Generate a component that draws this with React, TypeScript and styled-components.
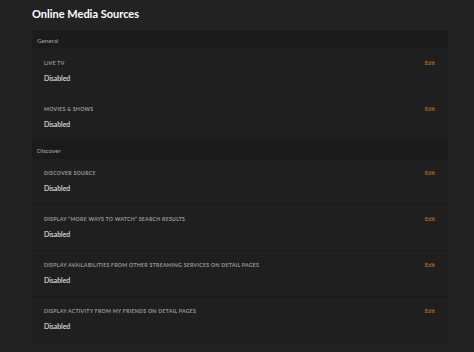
import React from "react";
import styled, { createGlobalStyle } from "styled-components";

const Global = createGlobalStyle`
  html, body { margin: 0; padding: 0; background: #222222; }
  body { font-family: Lato, "Open Sans", "Liberation Sans", sans-serif; -webkit-font-smoothing: antialiased; }
`;

const Page = styled.div`
  width: 474px;
  height: 352px;
  box-sizing: border-box;
  padding: 7px 26px 0 32px;
  overflow: hidden;
`;

const Title = styled.h1`
  margin: 0 0 10px 0;
  font-size: 11px;
  line-height: 14px;
  font-weight: 700;
  color: #ffffff;
`;

const Section = styled.section`
  display: flex;
  flex-direction: column;
`;

const SectionHeader = styled.div`
  height: 18px;
  display: flex;
  align-items: center;
  padding-left: 5px;
  background: #1b1b1b;
  font-size: 6.2px;
  color: #a8a8a8;
`;

const Row = styled.div`
  height: 46px;
  box-sizing: border-box;
  display: flex;
  justify-content: space-between;
  padding: 0 13px 0 12px;
  background: #1f1f1f;
  border-bottom: 1px solid #1a1a1a;
`;

const RowText = styled.div`
  display: flex;
  flex-direction: column;
`;

const Label = styled.div`
  margin-top: 10px;
  font-size: 5.2px;
  line-height: 8px;
  letter-spacing: 0.28px;
  font-weight: 700;
  text-transform: uppercase;
  color: #9a9a9a;
`;

const Value = styled.div`
  margin-top: 6px;
  font-size: 6.9px;
  line-height: 10px;
  color: #f2f2f2;
`;

const Edit = styled.button`
  margin-top: 10px;
  height: 8px;
  padding: 0;
  border: 0;
  background: none;
  font-family: inherit;
  font-size: 6px;
  line-height: 8px;
  color: #cc7b19;
  cursor: pointer;
`;

type Setting = { label: string; value: string };

const sections: { title: string; items: Setting[] }[] = [
  {
    title: "General",
    items: [
      { label: "Live TV", value: "Disabled" },
      { label: "Movies & Shows", value: "Disabled" },
    ],
  },
  {
    title: "Discover",
    items: [
      { label: "Discover Source", value: "Disabled" },
      { label: "Display \u201cMore Ways To Watch\u201d Search Results", value: "Disabled" },
      { label: "Display Availabilities From Other Streaming Services On Detail Pages", value: "Disabled" },
      { label: "Display Activity From My Friends On Detail Pages", value: "Disabled" },
    ],
  },
];

export default function App() {
  return (
    <>
      <Global />
      <Page>
        <Title>Online Media Sources</Title>
        {sections.map((s) => (
          <Section key={s.title}>
            <SectionHeader>{s.title}</SectionHeader>
            {s.items.map((it) => (
              <Row key={it.label}>
                <RowText>
                  <Label>{it.label}</Label>
                  <Value>{it.value}</Value>
                </RowText>
                <Edit>Edit</Edit>
              </Row>
            ))}
          </Section>
        ))}
      </Page>
    </>
  );
}
